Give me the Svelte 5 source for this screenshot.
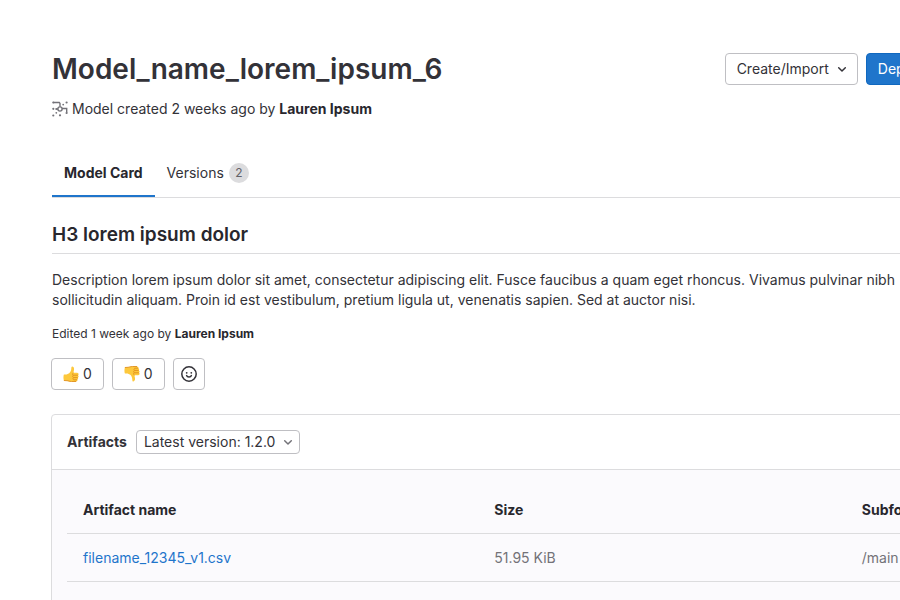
<script>
  const artifacts = [{ name: 'filename_12345_v1.csv', size: '51.95 KiB', folder: '/main' }];
  let version = $state('1.2.0');
</script>

{#snippet thumb()}
  <path d="M6.2 7.2 C7.4 6.2 8.2 4.6 8.3 2.6 C8.3 1.2 8.6 .5 9.4 .6 C11 .8 11.3 2.7 10.9 4.4 L10.4 6.7 L14.2 6.7 C16 6.8 16 8.9 14.9 9.2 C16 9.7 15.8 11.3 14.7 11.6 C15.5 12.2 15.2 13.6 14.2 13.8 C14.7 14.6 14.2 15.6 13 15.6 L8.4 15.6 C6.4 15.6 5.4 14.8 4 14.7 L.9 14.6 C.3 12.6 .3 10.3 .9 8.6 L3.6 8.5 Z" fill="#fdc83c" />
  <path d="M10.4 6.9 C9.4 7.4 9.3 8.8 10.3 9.2 H14.9 M10.3 9.3 C9.4 9.9 9.5 11.2 10.5 11.6 H14.7 M10.5 11.7 C9.7 12.2 9.8 13.4 10.8 13.8 H14.2 M.9 14.5 L4 14.7 C5.4 14.8 6.4 15.5 8.4 15.5 H13" fill="none" stroke="#e08f1c" stroke-width=".9" />
{/snippet}

<main>
  <header>
    <div>
      <h1>Model_name_lorem_ipsum_6</h1>
      <p class="meta">
        <svg width="16" height="16" viewBox="0 0 16 16" fill="none" stroke="#737278" stroke-width="1.4" aria-hidden="true">
          <path d="M1.3 1.5H7.3L8 2.4V5.8M10 7.5H14.7V11.5M4.2 8H6" />
          <circle cx="8" cy="8" r="2.1" />
          <g fill="#737278" stroke="none">
            <circle cx="1.3" cy="1.5" r="1.1" /><circle cx="11.2" cy="3.6" r=".9" /><circle cx="14.6" cy="1.5" r="1.1" />
            <circle cx="1.3" cy="7.8" r="1.1" /><circle cx="4.2" cy="8" r=".9" /><circle cx="14.6" cy="12" r="1.1" />
            <circle cx="1.3" cy="14.5" r="1.1" /><circle cx="4.3" cy="11.8" r=".9" /><circle cx="8" cy="14.3" r="1.1" />
          </g>
        </svg>
        <span>Model created 2 weeks ago by <strong>Lauren Ipsum</strong></span>
      </p>
    </div>
    <div class="actions">
      <button class="btn dropdown">
        Create/Import
        <svg width="16" height="16" viewBox="0 0 16 16" fill="none" stroke="#333238" stroke-width="1.5" stroke-linecap="round" stroke-linejoin="round" aria-hidden="true"><path d="M4.7 6.8 8 10l3.3-3.2" /></svg>
      </button>
      <button class="btn primary">Deploy</button>
    </div>
  </header>

  <nav>
    <a href="#card" class="active" aria-current="page">Model Card</a>
    <a href="#versions">Versions <span class="badge">2</span></a>
  </nav>

  <section id="card">
    <h3>H3 lorem ipsum dolor</h3>
    <p class="description">
      Description lorem ipsum dolor sit amet, consectetur adipiscing elit. Fusce faucibus a quam eget rhoncus. Vivamus pulvinar nibh sollicitudin aliquam. Proin id est vestibulum, pretium ligula ut, venenatis sapien. Sed at auctor nisi.
    </p>
    <p class="edited">Edited 1 week ago by <strong>Lauren Ipsum</strong></p>
    <div class="reactions">
      <button class="btn" aria-label="Thumbs up, 0">
        <svg width="16" height="16" viewBox="0 0 16 16" aria-hidden="true">{@render thumb()}</svg>
        0
      </button>
      <button class="btn" aria-label="Thumbs down, 0">
        <svg width="16" height="16" viewBox="0 0 16 16" aria-hidden="true"><g transform="matrix(1 0 0 -1 0 16)">{@render thumb()}</g></svg>
        0
      </button>
      <button class="btn add" aria-label="Add reaction">
        <svg width="16" height="16" viewBox="0 0 16 16" fill="none" stroke="#333238" stroke-width="1.5" stroke-linecap="round" aria-hidden="true">
          <circle cx="8" cy="8" r="7.2" />
          <path d="M5.6 9.6C6.2 11.4 9.8 11.4 10.4 9.6" />
          <g fill="#333238" stroke="none"><circle cx="5.7" cy="6.8" r=".9" /><circle cx="10.3" cy="6.8" r=".9" /></g>
        </svg>
      </button>
    </div>
  </section>

  <section class="card">
    <div class="card-head">
      <label for="version">Artifacts</label>
      <div class="picker">
        <select id="version" bind:value={version}>
          <option value="1.2.0">Latest version: 1.2.0</option>
        </select>
        <svg width="16" height="16" viewBox="0 0 16 16" fill="none" stroke="#737278" stroke-width="1.5" stroke-linecap="round" stroke-linejoin="round" aria-hidden="true"><path d="M4.7 6.8 8 10l3.3-3.2" /></svg>
      </div>
    </div>
    <div class="card-body">
      <table>
        <colgroup><col class="name" /><col class="size" /><col /></colgroup>
        <thead>
          <tr><th>Artifact name</th><th>Size</th><th>Subfolder</th></tr>
        </thead>
        <tbody>
          {#each artifacts as artifact}
            <tr>
              <td><a href="#file">{artifact.name}</a></td>
              <td>{artifact.size}</td>
              <td>{artifact.folder}</td>
            </tr>
          {/each}
        </tbody>
      </table>
    </div>
  </section>
</main>

<style>
  :global(body) {
    overflow-x: hidden;
    background: #fff;
    scrollbar-width: none;
  }
  main {
    box-sizing: border-box;
    width: calc(100% + 58px);
    padding: 48px 0 0 52px;
    font: 14px/20px Inter, 'Noto Sans', sans-serif;
    color: #333238;
  }
  h1, h3, p {
    margin: 0;
  }
  strong {
    font-weight: 700;
  }
  svg {
    display: block;
    flex: none;
  }
  header {
    display: flex;
    justify-content: space-between;
    align-items: flex-start;
  }
  h1 {
    font-size: 28px;
    line-height: 42px;
    font-weight: 600;
  }
  .meta {
    display: flex;
    align-items: center;
    gap: 4px;
    margin-top: 9px;
  }
  .meta strong, .edited strong {
    color: #28272d;
  }
  .actions {
    display: flex;
    gap: 8px;
    padding: 5px 22px 0 0;
  }
  .btn {
    box-sizing: border-box;
    display: flex;
    align-items: center;
    gap: 4px;
    height: 32px;
    padding: 0 11px;
    border: 1px solid #bfbfc3;
    border-radius: 4px;
    background: #fff;
    color: inherit;
    font: inherit;
  }
  .dropdown {
    gap: 5px;
    padding-right: 7px;
  }
  .primary {
    border-color: #1068bf;
    background: #1f75cb;
    color: #fff;
  }
  nav {
    display: flex;
    height: 48px;
    margin-top: 30px;
    border-bottom: 1px solid #dcdcde;
  }
  nav a {
    box-sizing: border-box;
    display: flex;
    align-items: center;
    gap: 5px;
    padding: 0 12px;
    color: inherit;
    text-decoration: none;
  }
  nav .active {
    font-weight: 700;
    color: #28272d;
    box-shadow: inset 0 -2px #1f75cb;
  }
  .badge {
    width: 20px;
    border-radius: 10px;
    background: #dcdcde;
    color: #626168;
    font-size: 12px;
    text-align: center;
  }
  h3 {
    padding: 24px 0 5px;
    border-bottom: 1px solid #dcdcde;
    font-size: 19px;
    line-height: 26px;
    font-weight: 600;
    color: #28272d;
  }
  .description {
    margin-top: 16px;
  }
  .edited {
    margin-top: 14px;
    font-size: 12px;
  }
  .reactions {
    display: flex;
    gap: 8px;
    margin: 14px 0 24px -1px;
  }
  .add {
    padding: 0 7px;
  }
  .card {
    margin-left: -1px;
    border: 1px solid #dcdcde;
    border-radius: 4px;
  }
  .card-head {
    display: flex;
    align-items: center;
    gap: 9px;
    padding: 15px;
    border-bottom: 1px solid #dcdcde;
  }
  label {
    font-weight: 700;
  }
  .picker {
    display: flex;
    align-items: center;
  }
  select {
    box-sizing: border-box;
    height: 24px;
    padding: 0 23px 0 7px;
    border: 1px solid #bfbfc3;
    border-radius: 4px;
    appearance: none;
    background: none;
    color: inherit;
    font: inherit;
  }
  .picker svg {
    margin-left: -20px;
    pointer-events: none;
  }
  .card-body {
    padding: 16px 15px 48px;
    background: #fbfafd;
  }
  table {
    width: 100%;
    border-collapse: collapse;
    table-layout: fixed;
    color: #737278;
  }
  .name {
    width: 47%;
  }
  .size {
    width: 42%;
  }
  th, td {
    height: 47px;
    padding: 0 16px;
    border-bottom: 1px solid #dcdcde;
    text-align: left;
    white-space: nowrap;
  }
  th {
    font-weight: 700;
    color: #28272d;
  }
  td a {
    color: #1f75cb;
    text-decoration: none;
  }
</style>
